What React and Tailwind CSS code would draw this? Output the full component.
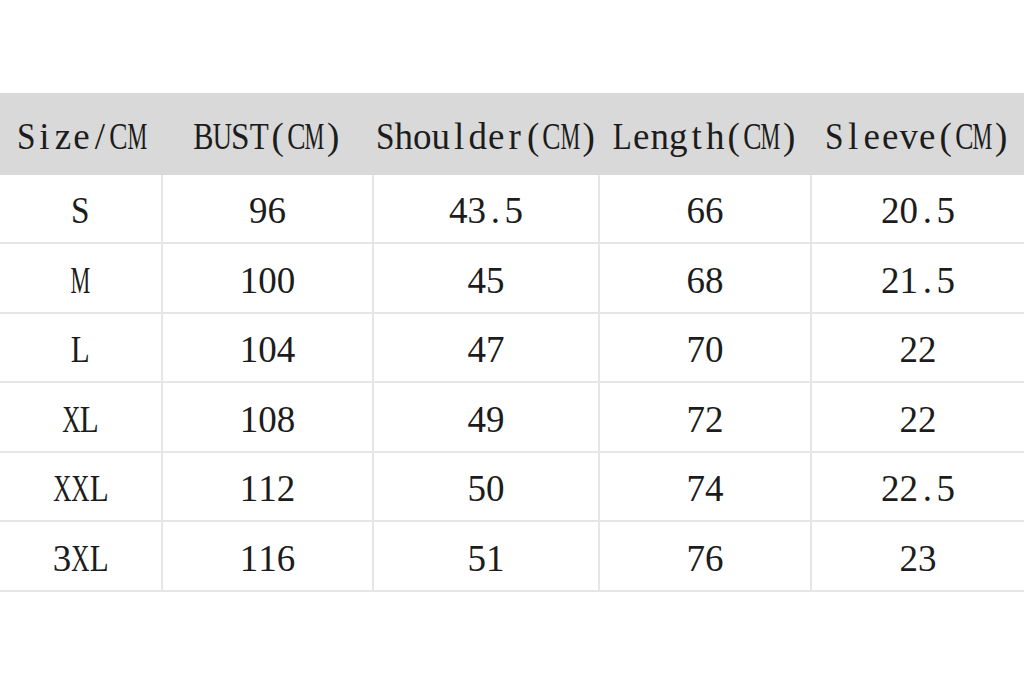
import React from "react";

const headers = ["Size/CM", "BUST(CM)", "Shoulder(CM)", "Length(CM)", "Sleeve(CM)"];
const rows = [
  ["S", "96", "43.5", "66", "20.5"],
  ["M", "100", "45", "68", "21.5"],
  ["L", "104", "47", "70", "22"],
  ["XL", "108", "49", "72", "22"],
  ["XXL", "112", "50", "74", "22.5"],
  ["3XL", "116", "51", "76", "23"],
];

const squeeze = {
  M: "scale-x-[0.6]",
  X: "scale-x-[0.68]",
  C: "scale-x-[0.74]",
  U: "scale-x-[0.72]",
  B: "scale-x-[0.82]",
  T: "scale-x-[0.84]",
  L: "scale-x-[0.84]",
  S: "scale-x-[0.9]",
};

function Mono({ text }) {
  return (
    <span className="inline-flex whitespace-nowrap">
      {text.split("").map((ch, i) => (
        <span key={i} className="inline-flex w-[18.5px] justify-center">
          <span className={`inline-block shrink-0 ${squeeze[ch] || ""}`}>{ch}</span>
        </span>
      ))}
    </span>
  );
}

export default function App() {
  return (
    <div
      className="w-[1024px] h-[683px] bg-white pt-[93px] text-[#1c1c1c] text-[37px] leading-none overflow-hidden"
      style={{ fontFamily: '"Liberation Serif", "Times New Roman", serif' }}
    >
      <div className="grid grid-cols-[163px_211px_226px_212px_212px] h-[81.5px] bg-[#d9d9d9]">
        {headers.map((h) => (
          <div key={h} className="flex items-center justify-center pt-[6px]">
            <Mono text={h} />
          </div>
        ))}
      </div>
      {rows.map((r, i) => (
        <div
          key={i}
          className="grid grid-cols-[163px_211px_226px_212px_212px] h-[69.5px] border-b-2 border-[#e6e6e6]"
        >
          {r.map((c, j) => (
            <div
              key={j}
              className={`flex items-center justify-center pt-[5px] ${j < 4 ? "border-r-2 border-[#e6e6e6]" : ""}`}
            >
              <Mono text={c} />
            </div>
          ))}
        </div>
      ))}
    </div>
  );
}
